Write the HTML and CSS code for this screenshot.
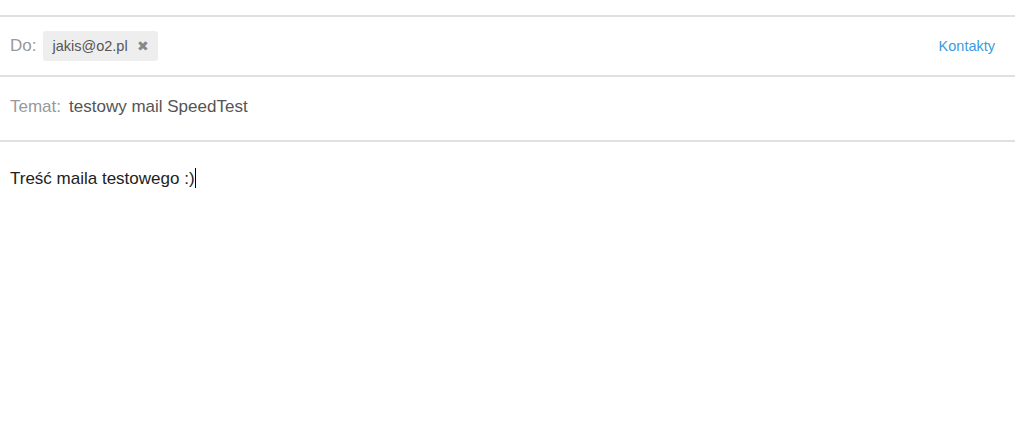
FILE: index.html
```html
<!DOCTYPE html>
<html lang="pl">
<head>
  <meta charset="UTF-8" />
  <title>Nowa wiadomość</title>
  <link rel="stylesheet" href="styles.css">
</head>
<body>
  <div class="composer">
    <div class="row row-to">
      <span class="label">Do:</span>
      <span class="chip">jakis@o2.pl <span class="chip-x">&#x2716;</span></span>
      <a class="contacts" href="#">Kontakty</a>
    </div>
    <div class="row row-subject">
      <span class="label">Temat:</span>
      <span class="subject">testowy mail SpeedTest</span>
    </div>
    <div class="row row-body">
      <p class="body-text">Treść maila testowego :)<span class="caret"></span></p>
    </div>
  </div>
</body>
</html>
```

FILE: styles.css
```css
html, body {
  margin: 0;
  padding: 0;
  background: #fff;
  font-family: 'Liberation Sans', Arial, sans-serif;
  color: #222;
}

.composer {
  margin-top: 15px;
  width: 1015px;
}

.row {
  display: flex;
  align-items: center;
  border-top: 2px solid #e0e0e0;
  padding: 0 10px;
}

.label {
  font-size: 17px;
  color: #999;
}

.row-to {
  height: 58px;
}

.chip {
  display: inline-flex;
  align-items: center;
  height: 30px;
  margin-left: 7px;
  padding: 0 9px 0 9px;
  background: #eee;
  border-radius: 3px;
  font-size: 14.5px;
  color: #555;
}

.chip-x {
  margin-left: 9px;
  font-size: 14px;
  color: #888;
}

.contacts {
  margin-left: auto;
  margin-right: 10px;
  font-size: 14.5px;
  color: #3a9be0;
  text-decoration: none;
}

.row-subject {
  align-items: baseline;
  height: 63px;
}

.row-subject .label {
  padding-top: 20px;
}

.subject {
  margin-left: 8px;
  font-size: 17px;
  color: #555;
}

.row-body {
  display: block;
}

.body-text {
  margin: 26px 0 0;
  font-size: 17px;
  color: #222;
}

.caret {
  display: inline-block;
  width: 1px;
  height: 20px;
  margin-left: 0;
  background: #000;
  vertical-align: -4px;
}
```
